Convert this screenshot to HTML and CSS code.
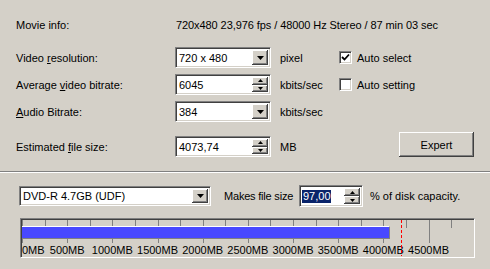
FILE: index.html
```html
<!DOCTYPE html>
<html>
<head>
<meta charset="utf-8">
<link rel="stylesheet" href="styles.css">
</head>
<body>
<div class="dialog">
  <div class="top">
    <div class="info-row">
      <span class="lbl">Movie info:</span>
      <span class="info">720x480 23,976 fps / 48000 Hz Stereo / 87 min 03 sec</span>
    </div>
    <div class="grid">
      <span class="lbl">Video <u>r</u>esolution:</span>
      <div class="field combo"><span class="val">720 x 480</span><span class="btn drop"><svg width="7" height="4" viewBox="0 0 7 4"><polygon points="0,0 7,0 3.5,4" fill="#000"/></svg></span></div>
      <span class="unit">pixel</span>
      <label class="check"><span class="box"><svg width="9" height="9" viewBox="0 0 9 9"><polyline points="1,4 3.5,6.5 8,1.5" fill="none" stroke="#000" stroke-width="1.8"/></svg></span>Auto select</label>

      <span class="lbl">Average <u>v</u>ideo bitrate:</span>
      <div class="field combo"><span class="val">6045</span><span class="btn spin"><span class="half"><svg width="5" height="3" viewBox="0 0 5 3"><polygon points="0,3 5,3 2.5,0" fill="#000"/></svg></span><span class="half"><svg width="5" height="3" viewBox="0 0 5 3"><polygon points="0,0 5,0 2.5,3" fill="#000"/></svg></span></span></div>
      <span class="unit">kbits/sec</span>
      <label class="check"><span class="box"></span>Auto setting</label>

      <span class="lbl"><u>A</u>udio Bitrate:</span>
      <div class="field combo"><span class="val">384</span><span class="btn drop"><svg width="7" height="4" viewBox="0 0 7 4"><polygon points="0,0 7,0 3.5,4" fill="#000"/></svg></span></div>
      <span class="unit">kbits/sec</span>
      <span></span>
    </div>
    <div class="est-row">
      <span class="lbl">Estimated <u>f</u>ile size:</span>
      <div class="field combo"><span class="val">4073,74</span><span class="btn spin"><span class="half"><svg width="5" height="3" viewBox="0 0 5 3"><polygon points="0,3 5,3 2.5,0" fill="#000"/></svg></span><span class="half"><svg width="5" height="3" viewBox="0 0 5 3"><polygon points="0,0 5,0 2.5,3" fill="#000"/></svg></span></span></div>
      <span class="unit">MB</span>
      <button class="expert">Expert</button>
    </div>
  </div>
  <div class="sep"></div>
  <div class="bottom">
    <div class="disk-row">
      <div class="field combo disk"><span class="val">DVD-R 4.7GB (UDF)</span><span class="btn drop"><svg width="7" height="4" viewBox="0 0 7 4"><polygon points="0,0 7,0 3.5,4" fill="#000"/></svg></span></div>
      <span class="makes">Makes file size</span>
      <div class="field combo pct"><span class="val"><span class="sel">97,00</span></span><span class="btn spin"><span class="half"><svg width="5" height="3" viewBox="0 0 5 3"><polygon points="0,3 5,3 2.5,0" fill="#000"/></svg></span><span class="half"><svg width="5" height="3" viewBox="0 0 5 3"><polygon points="0,0 5,0 2.5,3" fill="#000"/></svg></span></span></div>
      <span class="cap">% of disk capacity.</span>
    </div>
    <div class="meter">
      <div class="canvas">
        <span class="tick" style="left:0px"></span>
        <span class="tick short" style="left:22.6px"></span>
        <span class="tick" style="left:45.2px"></span>
        <span class="tick short" style="left:67.8px"></span>
        <span class="tick" style="left:90.3px"></span>
        <span class="tick short" style="left:112.9px"></span>
        <span class="tick" style="left:135.5px"></span>
        <span class="tick short" style="left:158.1px"></span>
        <span class="tick" style="left:180.7px"></span>
        <span class="tick short" style="left:203.3px"></span>
        <span class="tick" style="left:225.8px"></span>
        <span class="tick short" style="left:248.4px"></span>
        <span class="tick" style="left:271px"></span>
        <span class="tick short" style="left:293.6px"></span>
        <span class="tick" style="left:316.2px"></span>
        <span class="tick short" style="left:338.8px"></span>
        <span class="tick" style="left:361.3px"></span>
        <span class="tick short" style="left:383.9px"></span>
        <span class="tick" style="left:406.5px"></span>
        <span class="tick short" style="left:429.1px"></span>
        <div class="bar" style="width:368px"></div>
        <span class="mark first" style="left:0px">0MB</span>
        <span class="mark" style="left:45.2px">500MB</span>
        <span class="mark" style="left:90.3px">1000MB</span>
        <span class="mark" style="left:135.5px">1500MB</span>
        <span class="mark" style="left:180.7px">2000MB</span>
        <span class="mark" style="left:225.8px">2500MB</span>
        <span class="mark" style="left:271px">3000MB</span>
        <span class="mark" style="left:316.2px">3500MB</span>
        <span class="mark" style="left:361.3px">4000MB</span>
        <span class="mark" style="left:406.5px">4500MB</span>
        <span class="limit" style="left:379px"></span>
      </div>
    </div>
  </div>
</div>
</body>
</html>
```

FILE: styles.css
```css
html, body {
  margin: 0;
  padding: 0;
  background: #d4d0c8;
}
body {
  width: 490px;
  height: 269px;
  overflow: hidden;
  font-family: "Liberation Sans", Arial, sans-serif;
  font-size: 11px;
  color: #000;
}
.dialog {
  width: 490px;
  height: 269px;
}
.top {
  padding: 16px 16px 0 16px;
}
.info-row {
  display: flex;
  align-items: center;
  height: 18px;
}
.info-row .lbl {
  width: 160px;
}
.info {
  letter-spacing: -0.08px;
}
.grid {
  margin-top: 13px;
  display: grid;
  grid-template-columns: 159px 96px 67px 1fr;
  grid-auto-rows: 21px;
  row-gap: 6px;
  align-items: center;
}
.unit {
  padding-left: 9px;
}
.field {
  box-sizing: border-box;
  height: 21px;
  background: #fff;
  border-style: solid;
  border-width: 1px;
  border-color: #808080 #fff #fff #808080;
  box-shadow: inset 1px 1px 0 #404040, inset -1px -1px 0 #d4d0c8;
  display: flex;
  align-items: stretch;
  padding: 2px;
}
.val {
  flex: 1;
  display: flex;
  align-items: center;
  padding-left: 1px;
  white-space: nowrap;
  overflow: hidden;
}
.btn {
  width: 16px;
  flex: none;
  box-sizing: border-box;
  background: #d4d0c8;
}
.drop {
  display: flex;
  align-items: center;
  justify-content: center;
  box-shadow: inset -1px -1px 0 #404040, inset 1px 1px 0 #fff, inset -2px -2px 0 #808080;
}
.drop svg {
  display: block;
}
.spin {
  display: flex;
  flex-direction: column;
}
.half {
  flex: 1;
  display: flex;
  align-items: center;
  justify-content: center;
  box-shadow: inset -1px -1px 0 #404040, inset 1px 1px 0 #fff, inset -2px -2px 0 #808080;
}
.half svg {
  display: block;
}
.check {
  display: flex;
  align-items: center;
  gap: 5px;
  padding-left: 1px;
}
.box {
  width: 13px;
  height: 13px;
  box-sizing: border-box;
  background: #fff;
  border-style: solid;
  border-width: 1px;
  border-color: #808080 #fff #fff #808080;
  box-shadow: inset 1px 1px 0 #404040, inset -1px -1px 0 #d4d0c8;
  display: flex;
  align-items: center;
  justify-content: center;
}
.box svg {
  display: block;
}
.est-row {
  margin-top: 10px;
  display: flex;
  align-items: center;
  height: 25px;
}
.est-row .lbl {
  width: 159px;
  margin-top: 5px;
}
.est-row .field {
  width: 96px;
  margin-top: 4px;
}
.est-row .unit {
  margin-top: 5px;
}
.expert {
  margin-left: auto;
  width: 75px;
  height: 25px;
  box-sizing: border-box;
  border: none;
  background: #d4d0c8;
  font-family: "Liberation Sans", Arial, sans-serif;
  font-size: 11px;
  color: #000;
  padding: 0;
  box-shadow: inset -1px -1px 0 #404040, inset 1px 1px 0 #fff, inset -2px -2px 0 #808080;
}
.sep {
  margin-top: 14px;
  height: 0;
  border-top: 1px solid #808080;
  border-bottom: 1px solid #fff;
}
.bottom {
  padding: 12px 15px 0 19px;
}
.disk-row {
  display: flex;
  align-items: center;
  height: 22px;
}
.disk {
  width: 192px;
  height: 20px;
}
.makes {
  margin-left: 13px;
  width: 75px;
  white-space: nowrap;
  letter-spacing: -0.2px;
}
.pct {
  width: 64px;
  height: 22px;
}
.pct .val {
  padding-left: 0;
}
.sel {
  background: #0a246a;
  color: #fff;
  padding: 0 0 0 1px;
  line-height: 13px;
}
.cap {
  margin-left: 7px;
}
.meter {
  margin-top: 11px;
  margin-left: 1px;
  width: 455px;
  height: 40px;
  box-sizing: border-box;
  border-style: solid;
  border-width: 1px;
  border-color: #808080 #fff #fff #808080;
  box-shadow: inset 1px 1px 0 #404040, inset -1px -1px 0 #d4d0c8;
  padding: 1px;
}
.canvas {
  position: relative;
  width: 100%;
  height: 100%;
  overflow: hidden;
}
.tick {
  position: absolute;
  top: 0;
  width: 1px;
  height: 23px;
  background: #808080;
}
.tick.short {
  height: 8px;
}
.bar {
  position: absolute;
  left: 0;
  top: 6px;
  height: 13px;
  box-sizing: border-box;
  background: #4848ff;
  border-top: 1px solid #fff;
  border-right: 1px solid #808080;
  border-bottom: 1px solid #808080;
}
.mark {
  position: absolute;
  top: 23px;
  line-height: 14px;
  transform: translateX(-50%);
  white-space: nowrap;
}
.mark.first {
  transform: none;
}
.limit {
  position: absolute;
  top: 0;
  width: 1px;
  height: 100%;
  background: repeating-linear-gradient(to bottom, #ff0000 0 3px, transparent 3px 5px);
}
```
